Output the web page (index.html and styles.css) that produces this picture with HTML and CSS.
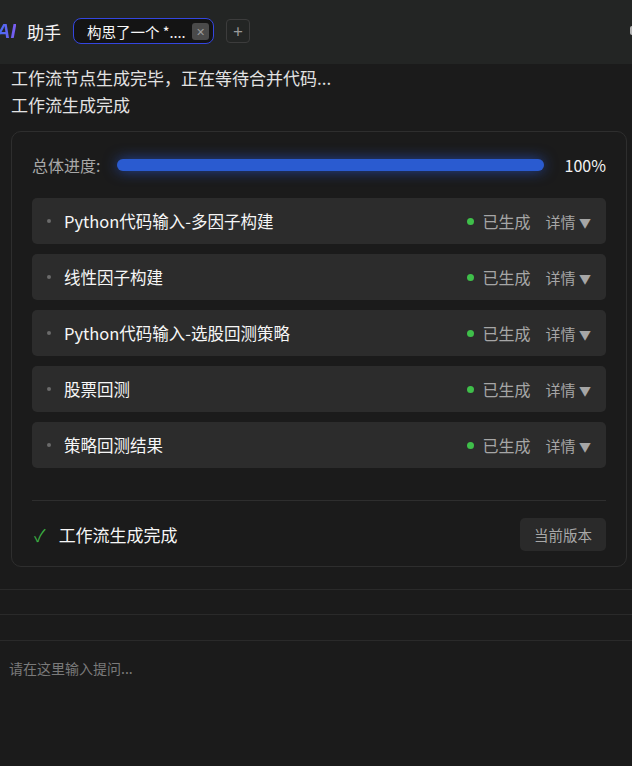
FILE: index.html
```html
<!DOCTYPE html>
<html lang="zh">
<head>
    <meta charset="UTF-8">
    <meta name="viewport" content="width=device-width, initial-scale=1.0">
    <title>AI 助手</title>
    <link rel="stylesheet" href="styles.css">
</head>
<body>
    <header class="topbar">
        <span class="logo">AI</span>
        <span class="title">助手</span>
        <div class="tab">
            <span class="tab-text">构思了一个 *....</span>
            <span class="tab-close">&#x2715;</span>
        </div>
        <div class="tab-add">+</div>
        <div class="spacer"></div>
        <div class="edge"></div>
    </header>

    <div class="messages">
        <p class="line">工作流节点生成完毕，正在等待合并代码...</p>
        <p class="line">工作流生成完成</p>

        <div class="card">
            <div class="progress">
                <span class="progress-label">总体进度:</span>
                <div class="progress-track">
                    <div class="progress-fill" style="width: 100%"></div>
                </div>
                <span class="progress-value">100%</span>
            </div>

            <ul class="nodes">
                <li class="node">
                    <span class="bullet"></span>
                    <span class="node-name">Python代码输入-多因子构建</span>
                    <span class="status"><span class="dot"></span>已生成</span>
                    <span class="detail">详情 <span class="caret">&#9660;</span></span>
                </li>
                <li class="node">
                    <span class="bullet"></span>
                    <span class="node-name">线性因子构建</span>
                    <span class="status"><span class="dot"></span>已生成</span>
                    <span class="detail">详情 <span class="caret">&#9660;</span></span>
                </li>
                <li class="node">
                    <span class="bullet"></span>
                    <span class="node-name">Python代码输入-选股回测策略</span>
                    <span class="status"><span class="dot"></span>已生成</span>
                    <span class="detail">详情 <span class="caret">&#9660;</span></span>
                </li>
                <li class="node">
                    <span class="bullet"></span>
                    <span class="node-name">股票回测</span>
                    <span class="status"><span class="dot"></span>已生成</span>
                    <span class="detail">详情 <span class="caret">&#9660;</span></span>
                </li>
                <li class="node">
                    <span class="bullet"></span>
                    <span class="node-name">策略回测结果</span>
                    <span class="status"><span class="dot"></span>已生成</span>
                    <span class="detail">详情 <span class="caret">&#9660;</span></span>
                </li>
            </ul>

            <div class="card-footer">
                <span class="check">&#10003;</span>
                <span class="done">工作流生成完成</span>
                <button class="version" type="button">当前版本</button>
            </div>
        </div>
    </div>

    <div class="rule rule-first"></div>
    <div class="rule"></div>
    <div class="rule rule-last"></div>

    <div class="composer">
        <div class="placeholder">请在这里输入提问...</div>
    </div>
</body>
</html>
```

FILE: styles.css
```css
body {
    margin: 0;
    background-color: #1b1b1b;
    color: #e6e6e6;
    font-family: "Noto Sans CJK SC", "Noto Sans", sans-serif;
    height: 766px;
    overflow: hidden;
}

.topbar {
    height: 64px;
    background-color: #232524;
    display: flex;
    align-items: center;
    overflow: hidden;
}

.logo {
    margin-left: -4px;
    margin-top: -2px;
    font-family: "Liberation Sans", sans-serif;
    font-style: italic;
    font-weight: bold;
    font-size: 20px;
    background: linear-gradient(90deg, #3d6ef2, #7b5cf0);
    -webkit-background-clip: text;
    background-clip: text;
    color: transparent;
}

.title {
    margin-left: 11px;
    margin-top: -2px;
    font-size: 17px;
    color: #f4f4f4;
}

.tab {
    margin-left: 12px;
    margin-top: -2px;
    height: 24px;
    border: 1.5px solid #3446e0;
    border-radius: 8px;
    background-color: #141414;
    display: flex;
    align-items: center;
    justify-content: space-between;
    padding-left: 13px;
    padding-right: 4px;
    width: 122px;
}

.tab-text {
    font-size: 14.5px;
    color: #f6f6f6;
    white-space: nowrap;
}

.tab-close {
    width: 17px;
    height: 17px;
    border-radius: 3px;
    background-color: #4a4a4a;
    color: #9a9a9a;
    font-size: 11px;
    display: flex;
    align-items: center;
    justify-content: center;
}

.tab-add {
    margin-left: 12px;
    margin-top: -2px;
    width: 22px;
    height: 22px;
    border: 1px solid #3c3c3c;
    border-radius: 4px;
    color: #9a9a9a;
    font-size: 17px;
    line-height: 22px;
    text-align: center;
}

.spacer {
    flex: 1;
}

.edge {
    width: 2px;
    height: 9px;
    margin-top: -3px;
    background-color: #b5b5b5;
    border-radius: 2px 0 0 2px;
}

.messages {
    padding: 0 5px 0 11px;
}

.line {
    margin: 0;
    font-size: 17px;
    line-height: 27px;
    color: #e2e2e2;
}

.card {
    margin-top: 13px;
    border: 1px solid #2e2e2e;
    border-radius: 10px;
    padding: 19px 20px 15px 20px;
}

.progress {
    display: flex;
    align-items: center;
    height: 28px;
}

.progress-label {
    font-size: 16px;
    color: #a8a8a8;
    width: 85px;
}

.progress-track {
    flex: 1;
    height: 12px;
    border-radius: 6px;
    background-color: #2a2a2a;
}

.progress-fill {
    height: 100%;
    border-radius: 6px;
    background-color: #2a5bd0;
    box-shadow: 0 0 14px rgba(40, 90, 225, 0.65);
}

.progress-value {
    width: 62px;
    text-align: right;
    font-size: 16px;
    color: #f2f2f2;
}

.nodes {
    list-style: none;
    margin: 19px 0 0 0;
    padding: 0;
    display: flex;
    flex-direction: column;
    gap: 10px;
}

.node {
    height: 46px;
    background-color: #2c2c2c;
    border-radius: 5px;
    display: flex;
    align-items: center;
    padding: 0 15px 0 15px;
}

.bullet {
    width: 4px;
    height: 4px;
    border-radius: 50%;
    background-color: #6b6b6b;
    margin-right: 13px;
}

.node-name {
    flex: 1;
    font-size: 16.5px;
    color: #f6f6f6;
}

.status {
    display: flex;
    align-items: center;
    font-size: 16px;
    color: #a6a6a6;
}

.dot {
    width: 7px;
    height: 7px;
    border-radius: 50%;
    background-color: #3fbf4a;
    margin-right: 9px;
}

.detail {
    margin-left: 15px;
    font-size: 15px;
    color: #a6a6a6;
}

.caret {
    font-size: 12px;
}

.card-footer {
    margin-top: 32px;
    border-top: 1px solid #2e2e2e;
    padding-top: 17px;
    display: flex;
    align-items: center;
}

.check {
    color: #3cb043;
    font-size: 17px;
    margin-left: 2px;
    margin-right: 13px;
}

.done {
    flex: 1;
    font-size: 17px;
    color: #f6f6f6;
}

.version {
    height: 33px;
    padding: 0 14px;
    border: none;
    border-radius: 5px;
    background-color: #2a2a2a;
    color: #a8a8a8;
    font-family: inherit;
    font-size: 14.5px;
}

.rule {
    height: 24px;
    border-bottom: 1px solid #2a2a2a;
}

.rule-first {
    height: 22px;
}

.rule-last {
    height: 25px;
}

.composer {
    padding: 17px 9px;
}

.placeholder {
    font-size: 14px;
    color: #7a7a7a;
}
```
